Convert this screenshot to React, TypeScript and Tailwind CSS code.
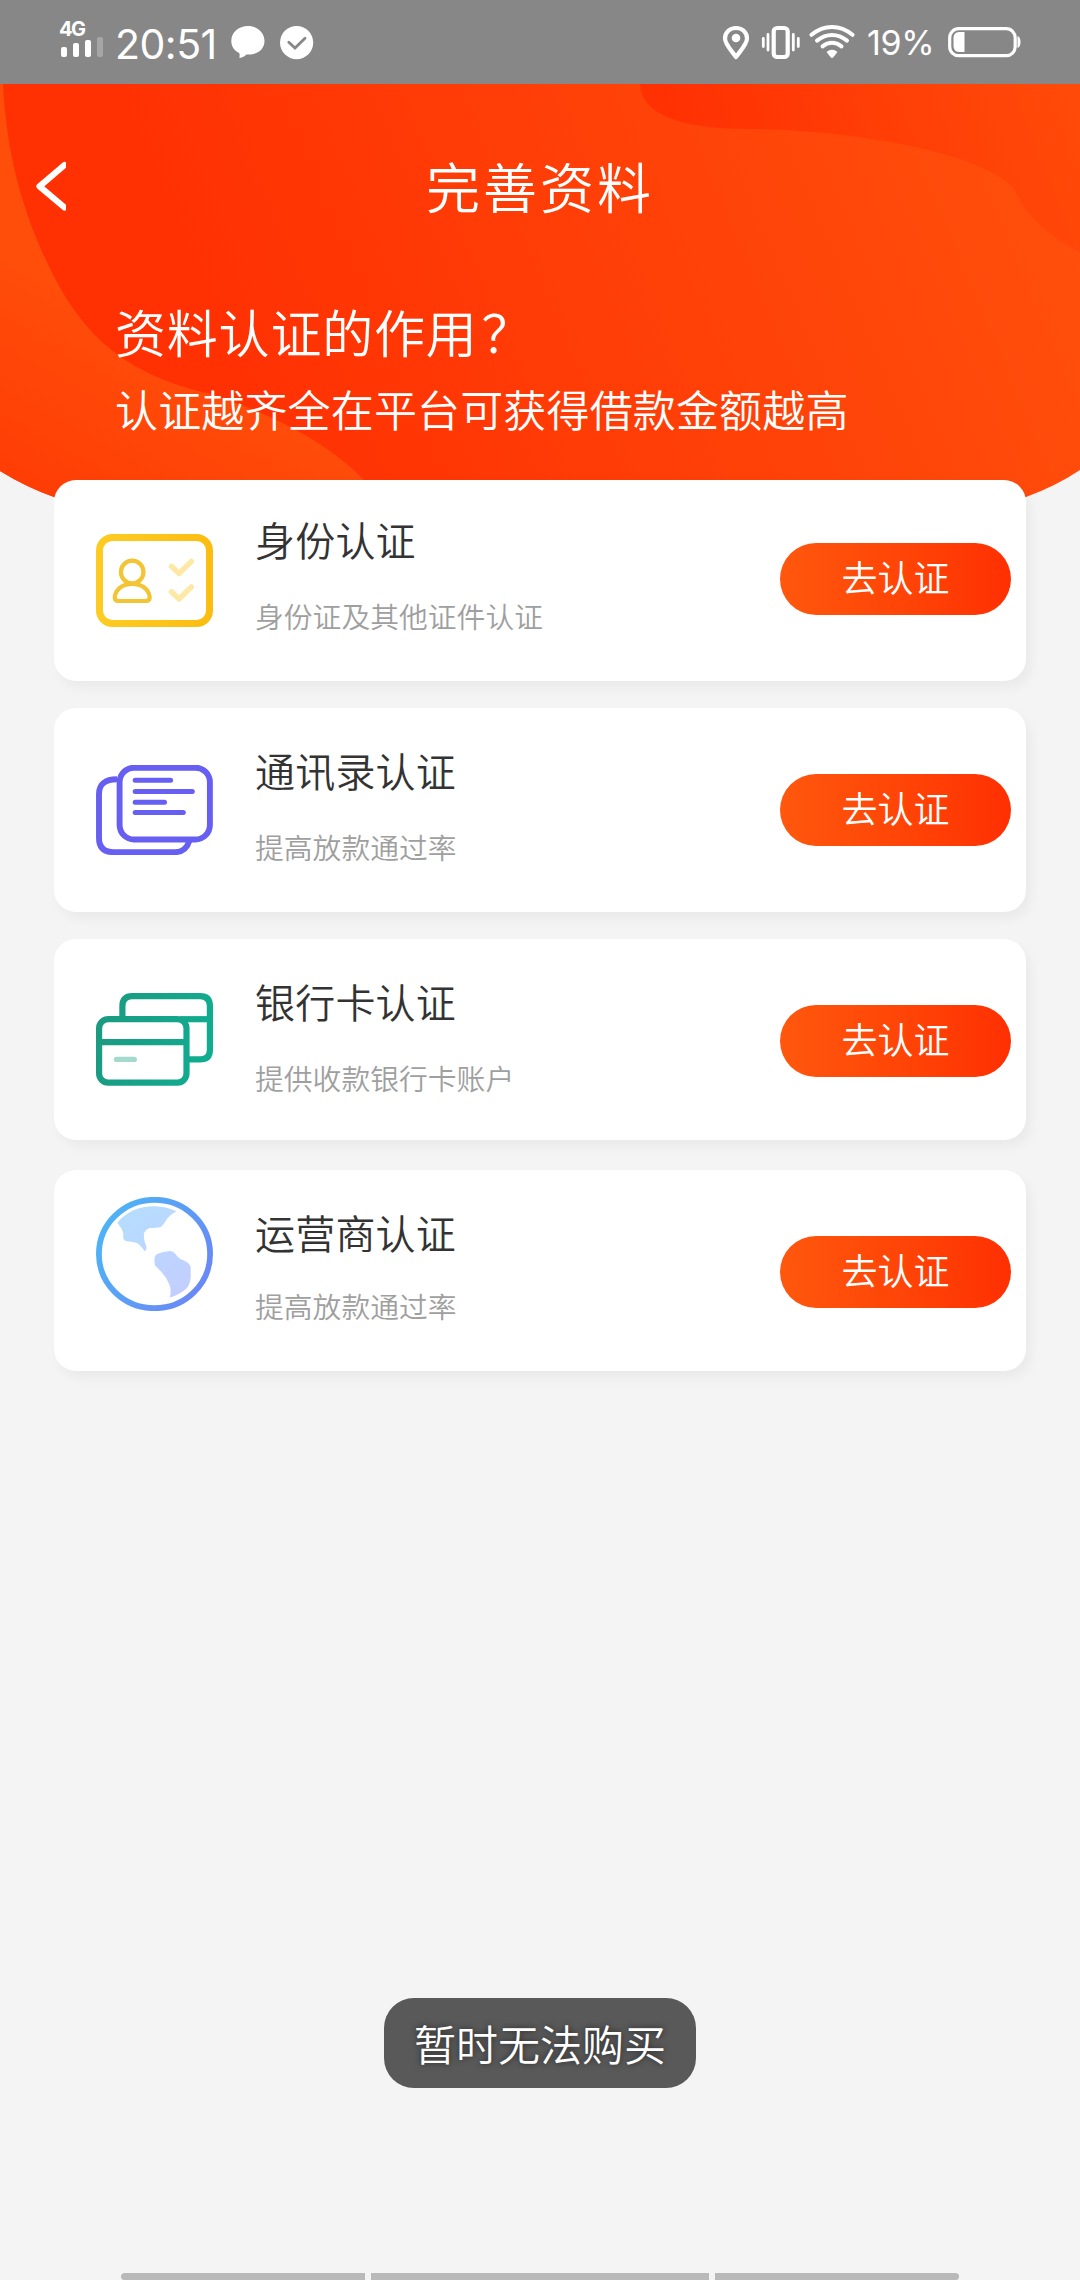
import type { ReactNode } from "react";

type AuthItem = {
    id: string;
    title: string;
    description: string;
    icon: ReactNode;
    cardClass: string;
    iconClass: string;
    textClass: string;
    textGapClass: string;
    buttonClass: string;
};

function IdentityIcon() {
    return (
        <svg width="117" height="93" viewBox="0 0 117 93" fill="none">
            <defs>
                <linearGradient id="identity" x1="0" y1="0" x2="1" y2="0">
                    <stop offset="0" stopColor="#fdcb22" />
                    <stop offset="1" stopColor="#fcbd12" />
                </linearGradient>
            </defs>
            <rect x="3.5" y="3.5" width="110" height="86" rx="13" stroke="url(#identity)" strokeWidth="7" />
            <g stroke="#f3c433" strokeWidth="4.2">
                <circle cx="36.2" cy="38" r="11.3" />
                <path d="M18.7 63C20 54 28 49.8 36.2 49.8S52.5 54 53.7 63Q53.7 67 50 67H22.4Q18.7 67 18.7 63Z" />
            </g>
            <g stroke="#fde8a6" strokeWidth="5.4" strokeLinecap="round" strokeLinejoin="round">
                <path d="M75.5 32.3L83 39.5L95.4 27.3" />
                <path d="M75.5 57.8L83 65L95.4 52.8" />
            </g>
        </svg>
    );
}

function ContactsIcon() {
    return (
        <svg width="117" height="90" viewBox="0 0 117 90" fill="none" stroke="#665ff2">
            <rect x="23.6" y="2.7" width="90.3" height="71.8" rx="14.5" strokeWidth="5.9" />
            <path d="M21 14.3Q3 14.3 3 29V73Q3 87.2 18 87.2H79Q90 87 93.3 76" strokeWidth="5.9" />
            <g strokeWidth="5" strokeLinecap="round">
                <path d="M39.2 15.3H74.6" />
                <path d="M39.2 26.5H96.3" />
                <path d="M39.2 37.3H68.5" />
                <path d="M39.2 47.5H87.3" />
            </g>
        </svg>
    );
}

function BankCardIcon() {
    return (
        <svg width="117" height="93" viewBox="0 0 117 93" fill="none">
            <defs>
                <linearGradient id="bank" gradientUnits="userSpaceOnUse" x1="0" y1="30" x2="117" y2="60">
                    <stop offset="0" stopColor="#1b9a81" />
                    <stop offset="1" stopColor="#10ad91" />
                </linearGradient>
            </defs>
            <g stroke="url(#bank)" strokeWidth="6.2">
                <path d="M26.4 25V13Q26.4 3.1 36 3.1H104Q113.9 3.1 113.9 13V57Q113.9 66.4 104 66.4H92" />
                <path d="M84 26.2H113" />
                <rect x="3.1" y="26.2" width="87.4" height="63.4" rx="9" />
                <path d="M4 49.2H90" />
            </g>
            <path d="M20.6 66.4H38.2" stroke="#a2dacd" strokeWidth="5.4" strokeLinecap="round" />
        </svg>
    );
}

function CarrierIcon() {
    return (
        <svg width="117" height="114" viewBox="0 0 117 114" fill="none">
            <defs>
                <linearGradient id="globe" x1="0" y1="0.2" x2="1" y2="0.8">
                    <stop offset="0" stopColor="#4db5f5" />
                    <stop offset="1" stopColor="#6b86f6" />
                </linearGradient>
                <linearGradient id="land" gradientUnits="userSpaceOnUse" x1="30" y1="10" x2="95" y2="95">
                    <stop offset="0" stopColor="#b5deff" />
                    <stop offset="1" stopColor="#c3cdff" />
                </linearGradient>
            </defs>
            <ellipse cx="58.5" cy="57" rx="55.6" ry="54.2" stroke="url(#globe)" strokeWidth="5.8" />
            <g fill="url(#land)">
                <path d="M21.3 25.7Q35 9.3 58.5 9.3Q70 9.5 80.6 14.3Q74 17.5 70 23.5Q66.5 29.5 64 30.2Q61 31 54 31Q48.5 32.5 47.8 38Q47.6 43 50 48.5Q51.5 52 48.6 54.3Q46 50 42.5 47Q39 44.5 32 44.5Q27.5 43.5 27.4 41Q27.8 36 26 32.5Q23.8 29 21.3 25.7Z" />
                <path d="M58.6 61Q59 57.5 63 56.3Q68 54 74 53.9Q78 54.3 80.5 58.5Q83 62 88 63.5Q94.3 66 94.7 71V80Q94.3 87 90.5 91.5Q84 97.5 73.9 100.5Q75.5 93 73.6 88Q70.5 80 65 74.5L59.2 68.8Q58 66 58.6 61Z" />
            </g>
        </svg>
    );
}

const authItems: AuthItem[] = [
    {
        id: "identity",
        title: "身份认证",
        description: "身份证及其他证件认证",
        icon: <IdentityIcon />,
        cardClass: "h-[201px] mb-[27px]",
        iconClass: "pt-[54px]",
        textClass: "pt-[35px]",
        textGapClass: "mt-[37px]",
        buttonClass: "mt-[63px]",
    },
    {
        id: "contacts",
        title: "通讯录认证",
        description: "提高放款通过率",
        icon: <ContactsIcon />,
        cardClass: "h-[204px] mb-[27px]",
        iconClass: "pt-[57px]",
        textClass: "pt-[38px]",
        textGapClass: "mt-[37px]",
        buttonClass: "mt-[66px]",
    },
    {
        id: "bank",
        title: "银行卡认证",
        description: "提供收款银行卡账户",
        icon: <BankCardIcon />,
        cardClass: "h-[201px] mb-[30px]",
        iconClass: "pt-[54px]",
        textClass: "pt-[38px]",
        textGapClass: "mt-[37px]",
        buttonClass: "mt-[66px]",
    },
    {
        id: "carrier",
        title: "运营商认证",
        description: "提高放款通过率",
        icon: <CarrierIcon />,
        cardClass: "h-[201px]",
        iconClass: "pt-[27px]",
        textClass: "pt-[38px]",
        textGapClass: "mt-[34px]",
        buttonClass: "mt-[66px]",
    },
];

function StatusBar() {
    return (
        <div className="flex h-[84px] items-start justify-between bg-[#878787] pl-[60px] pr-[59px] font-['Inter','Noto_Sans_CJK_SC',sans-serif] text-white">
            <div className="flex items-start">
                <div className="flex w-[44px] flex-col pt-[21px]">
                    <span className="-ml-px h-[16px] text-[20px] font-bold leading-[16px] tracking-[-1.5px]">4G</span>
                    <div className="flex h-[20px] items-end gap-[6px] pl-[1px]">
                        <span className="h-[10px] w-[6px] rounded-[2px] bg-white" />
                        <span className="h-[14px] w-[6px] rounded-[2px] bg-white" />
                        <span className="h-[17px] w-[6px] rounded-[2px] bg-white" />
                        <span className="h-[20px] w-[6px] rounded-[2px] bg-[#a6a6a6]" />
                    </div>
                </div>
                <span className="ml-[11px] w-[116px] whitespace-nowrap pt-[19px] text-[41px] leading-[50px] tracking-[-0.5px]">
                    20:51
                </span>
                <svg className="mt-[25px]" width="34" height="36" viewBox="0 0 34 36" fill="white">
                    <path d="M17 1C7.5 1 0.3 7.6 0.3 15.9C0.3 21.3 3.2 25.5 8.2 28C8.8 29.7 8.7 31.2 8.4 33C11.6 32.6 13.6 31.2 15.5 29.5C26 30.3 33.5 24.5 33.5 16C33.5 7.6 26.4 1 17 1Z" />
                </svg>
                <svg className="ml-[15px] mt-[26px]" width="34" height="34" viewBox="0 0 34 34" fill="none">
                    <circle cx="16.6" cy="16.6" r="16.6" fill="white" />
                    <path d="M8.8 16.2L15 22L25 12.3" stroke="#878787" strokeWidth="2.8" strokeLinecap="round" />
                </svg>
            </div>

            <div className="flex items-start pt-[25px]">
                <svg width="28" height="35" viewBox="0 0 28 35" fill="none">
                    <path d="M14 32C9 25 3 19 3 13.5C3 7.5 7.5 3 14 3S25 7.5 25 13.5C25 19 19 25 14 32Z" stroke="white" strokeWidth="4.2" strokeLinejoin="round" />
                    <circle cx="14" cy="13" r="4.3" fill="white" />
                </svg>
                <svg className="ml-[11px]" width="40" height="35" viewBox="0 0 40 35" fill="none" stroke="white" strokeLinecap="round">
                    <rect x="12.7" y="3" width="14" height="29" rx="3.5" strokeWidth="4.2" />
                    <path d="M2.3 13.5V21.5M7 9.5V25M32.3 9.5V25M37.3 13.5V21.5" strokeWidth="2.8" />
                </svg>
                <svg className="ml-[8px]" width="46" height="35" viewBox="0 0 46 35" fill="none" stroke="white" strokeWidth="4" strokeLinecap="round">
                    <path d="M2.5 9.8Q12 2 23 2T43.5 9.8" />
                    <path d="M8 15.6Q15 10 23 10T38 15.6" />
                    <path d="M13.5 21.3Q18 17.8 23 17.8T32.5 21.3" />
                    <path d="M17.5 27Q23 22.5 28.5 27L24.5 32Q23 34 21.5 32Z" fill="white" stroke="none" />
                </svg>
                <span className="ml-[12px] w-[81px] whitespace-nowrap text-[34px] leading-[36px] tracking-[-0.3px]">19%</span>
                <svg className="-mr-px" width="74" height="34" viewBox="0 0 74 34" fill="none">
                    <rect x="1.7" y="3.7" width="65.5" height="27" rx="9" stroke="white" strokeWidth="3.2" />
                    <path d="M16.5 7V27H11Q5.5 26.5 5.5 21V13Q5.5 7.5 11 7Z" fill="white" />
                    <path d="M69.5 11Q72.5 12 72.5 17T69.5 23Z" fill="white" />
                </svg>
            </div>
        </div>
    );
}

// Wavy orange backdrop, it continues below the first card
function HeaderBackdrop() {
    return (
        <svg className="absolute left-0 top-0" width="1080" height="460" viewBox="0 84 1080 460">
            <defs>
                <linearGradient id="base" gradientUnits="userSpaceOnUse" x1="250" y1="400" x2="1040" y2="60">
                    <stop offset="0" stopColor="#ff3103" />
                    <stop offset="1" stopColor="#ff500c" />
                </linearGradient>
                <linearGradient id="leftWave" gradientUnits="userSpaceOnUse" x1="80" y1="560" x2="190" y2="360">
                    <stop offset="0" stopColor="#ff3a04" />
                    <stop offset="1" stopColor="#ff4d0a" />
                </linearGradient>
                <linearGradient id="topWave" gradientUnits="userSpaceOnUse" x1="690" y1="160" x2="1040" y2="20">
                    <stop offset="0" stopColor="#ff3103" />
                    <stop offset="1" stopColor="#ff4a09" />
                </linearGradient>
                <clipPath id="arc">
                    <path d="M0 84H1080V470Q1056 486 1026 497Q900 544 540 544T54 497Q26 487 0 471Z" />
                </clipPath>
            </defs>
            <g clipPath="url(#arc)">
                <rect y="84" width="1080" height="460" fill="url(#base)" />
                <path d="M0 84H3C6 150 22 210 46 260C80 335 125 374 207 393C265 411 325 440 363 479L400 544H0Z" fill="url(#leftWave)" />
                <path d="M640 84C641 113 678 129 747 129C870 130 988 157 1013 188C1019 197 1028 226 1080 252V84Z" fill="url(#topWave)" />
            </g>
        </svg>
    );
}

function AuthCard({ item }: { item: AuthItem }) {
    return (
        <div
            className={`flex items-start rounded-[22px] bg-white pl-[42px] pr-[15px] shadow-[5px_7px_12px_rgba(0,0,0,0.045)] ${item.cardClass}`}
        >
            <div className={`w-[159px] shrink-0 ${item.iconClass}`}>{item.icon}</div>
            <div className={`flex-1 ${item.textClass}`}>
                <h2 className="text-[40px] font-[350] leading-[48px] tracking-[0.2px] text-[#333333]">{item.title}</h2>
                <p className={`text-[28.8px] font-[350] leading-[32px] text-[#9f9f9f] ${item.textGapClass}`}>
                    {item.description}
                </p>
            </div>
            <button
                type="button"
                className={`h-[72px] w-[231px] rounded-full bg-linear-to-r from-[#ff570d] to-[#ff2f02] pb-[6px] text-[36px] font-[350] leading-[66px] text-white ${item.buttonClass}`}
            >
                去认证
            </button>
        </div>
    );
}

export default function App() {
    return (
        <div className="relative flex h-[2280px] w-[1080px] flex-col overflow-hidden bg-[#f4f4f4] font-['Noto_Sans_CJK_SC',sans-serif]">
            <StatusBar />

            <div className="relative flex flex-1 flex-col">
                <HeaderBackdrop />

                <header className="relative h-[396px] text-white">
                    <div className="flex h-[206px] items-start pl-[34px] pt-[77px]">
                        <svg width="32" height="50" viewBox="0 0 32 50" fill="none">
                            <path d="M30.5 4L5.5 25.3L30.5 46.5" stroke="white" strokeWidth="6.2" strokeLinecap="round" strokeLinejoin="round" />
                        </svg>
                        <h1 className="-mt-[7px] w-[948px] text-center text-[54px] font-[350] leading-[64px] tracking-[3px]">
                            完善资料
                        </h1>
                    </div>
                    <div className="pl-[115px] pt-[9px]">
                        <p className="text-[51px] font-[350] leading-[64px] tracking-[0.8px]">
                            资料认证的作用<span className="ml-[4px]">？</span>
                        </p>
                        <p className="mt-[19px] text-[43px] font-[350] leading-[52px] tracking-[0.15px]">
                            认证越齐全在平台可获得借款金额越高
                        </p>
                    </div>
                </header>

                <main className="relative flex flex-1 flex-col px-[54px]">
                    {authItems.map((item) => (
                        <AuthCard key={item.id} item={item} />
                    ))}
                </main>
            </div>

            <div className="flex h-[7px] justify-center gap-[6px]">
                <span className="w-[244px] rounded-l-[4px] bg-[#b9b9b9]" />
                <span className="w-[338px] bg-[#b9b9b9]" />
                <span className="w-[244px] rounded-r-[4px] bg-[#b9b9b9]" />
            </div>

            <div className="absolute left-[384px] top-[1998px] flex h-[90px] w-[312px] items-center justify-center rounded-[30px] bg-[#595959] text-[42px] font-[350] leading-[50px] text-white [text-shadow:0_0_6px_rgba(0,0,0,0.6)]">
                暂时无法购买
            </div>
        </div>
    );
}
